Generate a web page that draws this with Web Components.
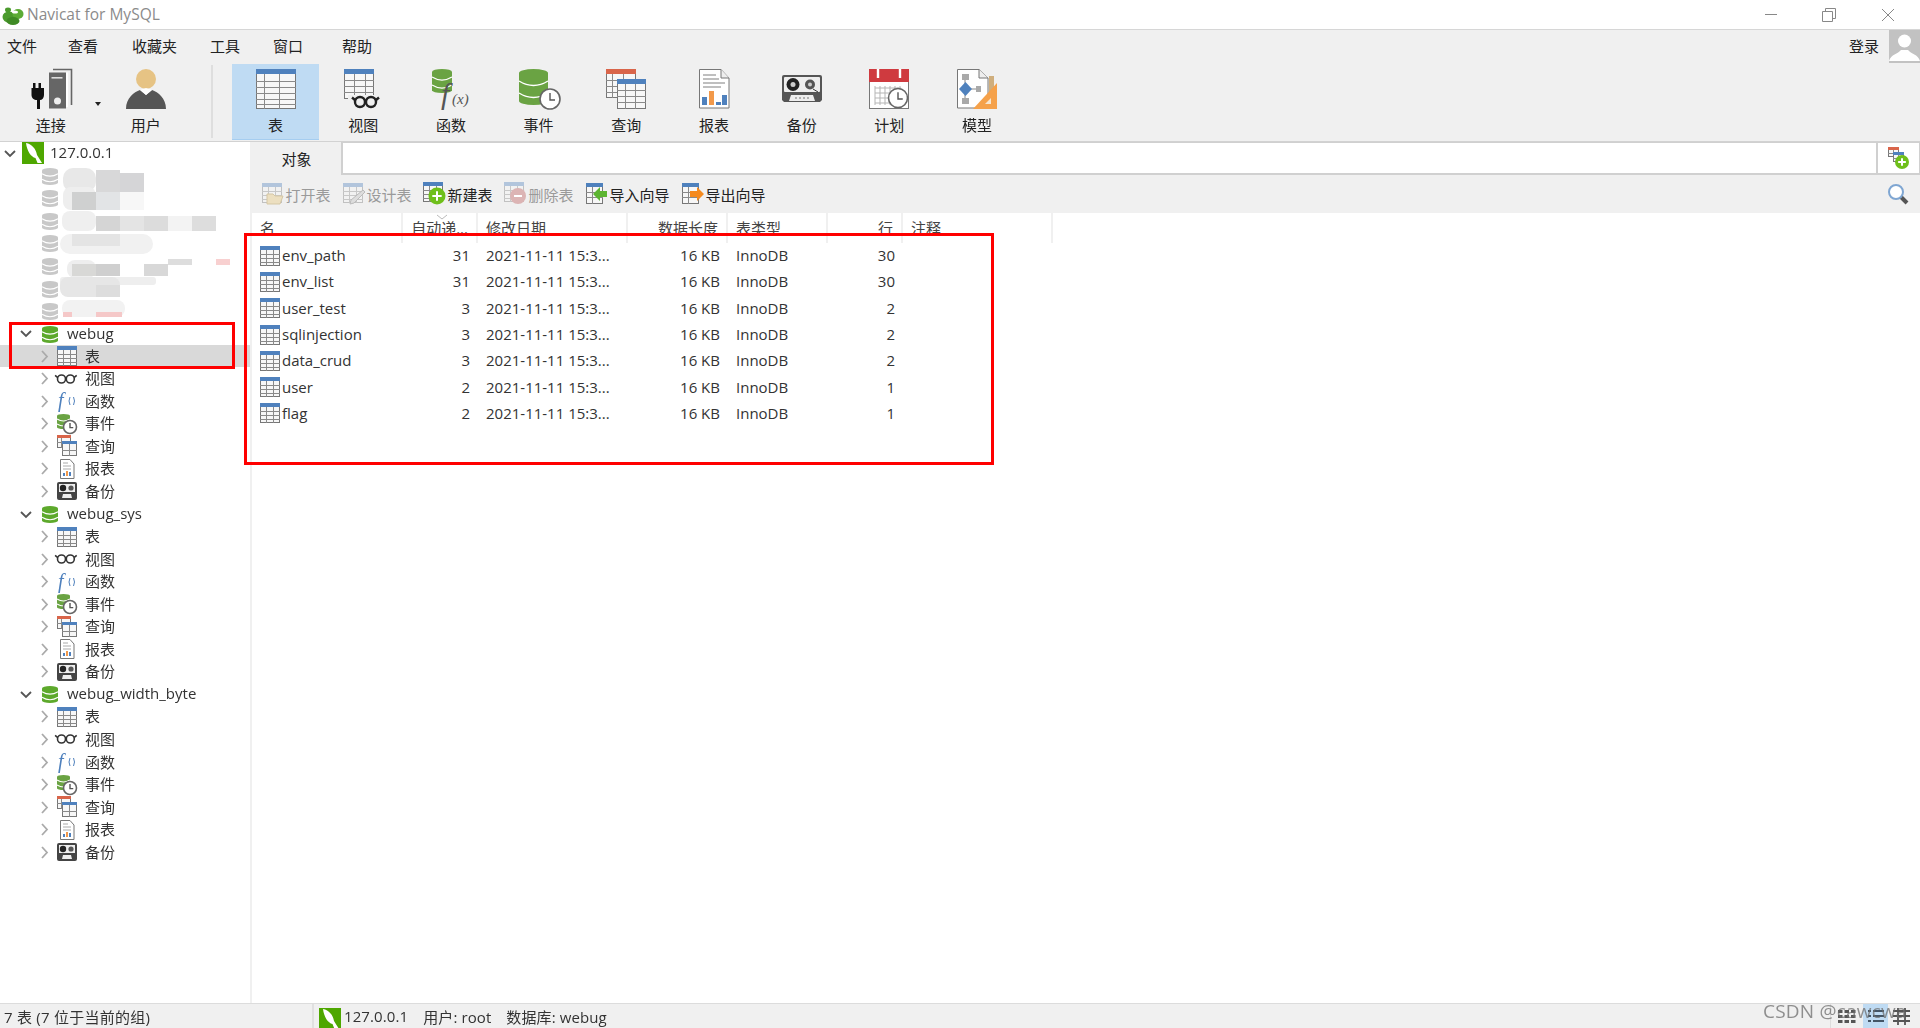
<!DOCTYPE html>
<html lang="zh">
<head>
<meta charset="utf-8">
<title>Navicat for MySQL</title>
<style>
  html, body { margin: 0; height: 100%; overflow: hidden; background: #fff; }
  body { font: 15px "Open Sans", "Noto Sans CJK SC", sans-serif; color: #333; }
</style>
</head>
<body>
<nc-app></nc-app>
<script>
// small drawing helpers, all icons are plain svg strings
function grid(x, y, w, h, head, vs, hs, headColor) {
  let s = `<rect x="${x + .5}" y="${y + .5}" width="${w - 1}" height="${h - 1}" fill="#f7f7f7" stroke="#777"/>`
  s += `<rect x="${x}" y="${y}" width="${w}" height="${head}" fill="${headColor || "#4f81bd"}"/>`
  vs.forEach(v => { s += `<path d="M${x + v + .5} ${y + head}V${y + h}" stroke="#8a8a8a"/>` })
  hs.forEach(v => { s += `<path d="M${x} ${y + v + .5}H${x + w}" stroke="#8a8a8a"/>` })
  return s
}
function db(x, y, w, h, color) {
  const ry = w * .14
  let s = `<rect x="${x}" y="${y}" width="${w}" height="${h}" rx="${w / 2}" ry="${ry}" fill="${color}"/>`
  for (let i = 1; i < 3; i++) {
    const top = y + i * h / 3
    s += `<path d="M${x} ${top}Q${x + w / 2} ${top + 2.2 * ry} ${x + w} ${top}" fill="none" stroke="#fff" stroke-width="${w > 20 ? 1.4 : 1.1}"/>`
  }
  return s
}
function clock(cx, cy, r) {
  return `<circle cx="${cx}" cy="${cy}" r="${r}" fill="#fff" stroke="#666" stroke-width="${r > 6 ? 1.6 : 1.2}"/><path d="M${cx} ${cy - r * .6}V${cy + r * .1}H${cx + r * .5}" fill="none" stroke="#555" stroke-width="${r > 6 ? 1.4 : 1}"/>`
}
function glasses(x, y, r, sw) {
  return `<g fill="none" stroke="#222" stroke-width="${sw}"><circle cx="${x + r}" cy="${y + r}" r="${r}"/><circle cx="${x + 3.2 * r}" cy="${y + r}" r="${r}"/><path d="M${x + 2 * r} ${y + r}h${r * .2}M${x} ${y + r * .6}l${-r * .6} ${-r * .5}M${x + 4.2 * r} ${y + r * .6}l${r * .6} ${-r * .5}"/></g>`
}
const dolphin = `<rect width="22" height="22" fill="#4ea700"/><path d="M4 1C10 2 14 7 15 13L20 21H15.5L13.5 16C9 15 5 9 4 1Z" fill="#fff"/>`
const smallTable = (x = 0, y = 0) => grid(x, y, 20, 20, 4, [6, 13], [8, 12, 16])
const plus = (cx, cy, r) => `<circle cx="${cx}" cy="${cy}" r="${r}" fill="#6fbf1a"/><path d="M${cx - r * .55} ${cy}H${cx + r * .55}M${cx} ${cy - r * .55}V${cy + r * .55}" stroke="#fff" stroke-width="2"/>`

const ICONS = {
  logo: [22, `<ellipse cx="7" cy="13" rx="6.5" ry="5.500" fill="#4b9a2d"/><ellipse cx="16" cy="10" rx="5.500" ry="5" fill="#5cab35"/><ellipse cx="11" cy="17" rx="6.500" ry="4" fill="#3f8a25"/><ellipse cx="6" cy="6" rx="3" ry="2.400" fill="#4b9a2d"/><ellipse cx="13" cy="8" rx="3" ry="1.600" fill="#fff"/>`],
  connect: [44, `<path d="M24 1.500H42.500V37" fill="none" stroke="#666" stroke-width="1.600"/><rect x="20" y="4.500" width="17" height="36" fill="#666"/><path d="M37 4.500H39V39H37Z" fill="#fff"/><rect x="22.500" y="9" width="11" height="1.600" fill="#ddd"/><circle cx="28.500" cy="33" r="3.500" fill="#eee"/>
    <path d="M4 15h2.500v5h3v-5H12v5h3v7c0 3-2 5-4 5v9H8v-9c-3 0-5.500-2-5.500-5v-7H4Z" fill="#111"/>`],
  user: [44, `<circle cx="22" cy="11" r="10" fill="#e6c384"/><path d="M2 41C2 30 10 24 16 22L22 27 28 22C34 24 42 30 42 41Z" fill="#555"/><path d="M16 22L22 27 28 22 22 20Z" fill="#fff"/>`],
  table: [44, grid(2, 1, 40, 40, 5, [8, 23], [12, 18, 24, 30, 35])],
  view: [44, grid(3, 1, 30, 30, 5, [10, 21], [11, 17, 23]) + `<rect x="7" y="27" width="36" height="12" fill="#f0f0f0"/>` + glasses(14, 29, 5, 2.4)],
  func: [44, db(3, 1, 20, 24, "#6aa343") + `<text x="12" y="36" font-family="Liberation Serif" font-style="italic" font-size="30" fill="#555">f</text><text x="23" y="36" font-family="Liberation Serif" font-style="italic" font-size="15" fill="#555">(x)</text>`],
  event: [44, db(2, 1, 29, 36, "#6aa343") + clock(33, 31, 10)],
  query: [44, grid(2, 1, 30, 29, 5, [6, 17], [11, 17, 23], "#d9654a") + grid(13, 11, 29, 30, 5, [8, 18], [11, 17, 23])],
  report: [44, `<path d="M7.500 1.500H29L37 10V40H7.500Z" fill="#fff" stroke="#777"/><path d="M29 1.500V10H37" fill="#eee" stroke="#777"/><path d="M11 7h13M11 11h16M11 15h22M11 19h18" stroke="#aaa" stroke-width="1.400"/><rect x="10" y="29" width="5" height="8" fill="#4f81bd"/><rect x="17" y="23" width="5" height="14" fill="#f2994a"/><rect x="24" y="34" width="5" height="3" fill="#4f81bd"/><rect x="30" y="27" width="5" height="10" fill="#4f81bd"/>`],
  backup: [44, `<path d="M4 7H40Q42 7 42 9V32L40 34H4L2 32V9Q2 7 4 7Z" fill="#555"/><rect x="4" y="9" width="36" height="15" rx="1" fill="#eee"/><circle cx="13" cy="16.500" r="6.500" fill="#222"/><circle cx="13" cy="16.500" r="2.500" fill="#ccc"/><circle cx="30" cy="16.500" r="5" fill="#555"/><circle cx="30" cy="16.500" r="2" fill="#ccc"/><path d="M33 21l5 3" stroke="#333"/><path d="M9 33L11 27H33L35 33Z" fill="#eee"/><path d="M15 30h14" stroke="#777" stroke-dasharray="2 2"/>`],
  schedule: [44, `<rect x="2.500" y="1.500" width="39" height="39" fill="#fff" stroke="#777"/><rect x="2" y="1" width="40" height="13" fill="#cf3a3f"/><path d="M11 1V10M33 1V10" stroke="#fff" stroke-width="2.400"/><g stroke="#b5b5b5"><path d="M8 20H34M8 25H32M8 30H28M8 35H28"/><path d="M8 18V37M13 18V37M18 18V37M23 18V37M28 18V34M33 18V24"/></g>` + clock(31, 30, 9.5)],
  model: [44, `<path d="M2.500 1.500H24L33 10V40H2.500Z" fill="#fff" stroke="#777"/><path d="M24 1.500V10H33" fill="#eee" stroke="#777"/><rect x="7" y="6" width="7" height="6" fill="#a9a9a9"/><rect x="7" y="30" width="7" height="6" fill="#a9a9a9"/><rect x="21" y="18" width="5" height="6" fill="#a9a9a9"/><path d="M10 12V30M16 21H21" stroke="#888"/><path d="M10.500 14L17 21 10.500 28 4 21Z" fill="#4f81bd"/><rect x="34" y="8" width="5" height="16" fill="#cfae7d"/><path d="M42 15V41H18Z" fill="#f5a14a"/><path d="M36 30V36H30Z" fill="#f7e6cf"/>`],
  conn: [22, dolphin],
  "db-green": [16, db(0, 0, 16, 17, "#5da92c")],
  "db-gray": [16, db(0, 0, 16, 17, "#c8c8c8")],
  "s-table": [22, smallTable(1, 1)],
  "s-view": [22, glasses(1.5, 7, 4, 1.6).replace(/#222/g, "#333")],
  "s-func": [22, `<text x="2" y="17" font-family="Liberation Serif" font-style="italic" font-size="20" fill="#4f81bd">f</text><path d="M14 7Q12 11 14 15M17.500 7Q19.500 11 17.500 15" fill="none" stroke="#4f81bd"/>`],
  "s-event": [22, db(1, 1, 13, 15, "#6aa343") + clock(14, 14, 6.5)],
  "s-query": [22, grid(1, 0, 14, 13, 3, [4], [7], "#d9654a") + grid(6, 6, 15, 15, 3, [7], [9])],
  "s-report": [22, `<path d="M4.500 1.500H14L18 6V20.500H4.500Z" fill="#fff" stroke="#777"/><path d="M7 5h5M7 8h8M7 11h8" stroke="#aaa"/><rect x="7" y="15" width="2" height="3" fill="#4f81bd"/><rect x="10" y="13" width="2" height="5" fill="#f2994a"/><rect x="13" y="14" width="2" height="4" fill="#4f81bd"/>`],
  "s-tape": [22, `<rect x="1" y="2" width="20" height="18" rx="2" fill="#444"/><rect x="3" y="4" width="16" height="8" fill="#eee"/><circle cx="7" cy="8" r="3.200" fill="#222"/><circle cx="15" cy="8" r="2.600" fill="#555"/><path d="M6 18L7 14H15L16 18Z" fill="#eee"/>`],
  "a-open": [24, `<g opacity=".38">${smallTable(1, 1)}</g><path d="M6 12H12L14 14H22L19 22H6Z" fill="#ecdfc0" stroke="#d5c7a5"/>`],
  "a-design": [24, `<g opacity=".38">${smallTable(1, 1)}</g><path d="M21 8L23 10 12 21 8 22 9 18Z" fill="#ddd" stroke="#bbb"/>`],
  "a-new": [24, smallTable(0, 0) + plus(14, 14, 8.5)],
  "a-del": [24, `<g opacity=".38">${smallTable(0, 0)}</g><circle cx="14" cy="14" r="8" fill="#dcb4b4"/><path d="M10 14H18" stroke="#fff" stroke-width="2"/>`],
  "a-import": [24, grid(1, 1, 17, 21, 4, [6], [9, 14]) + `<path d="M8 12L15 5V9H22V15H15V19Z" fill="#5cb531"/>`],
  "a-export": [24, grid(1, 1, 17, 21, 4, [6], [9, 14]) + `<path d="M23 12L16 5V9H9V15H16V19Z" fill="#f58a1f"/>`],
  search: [22, `<path d="M13 13L20 20" stroke="#555" stroke-width="4"/><circle cx="9" cy="9" r="7" fill="#fff" stroke="#7fa6d2" stroke-width="2"/>`],
  addtab: [22, grid(0, 0, 11, 10, 3, [5], [6], "#d9654a") + grid(5, 5, 11, 10, 3, [5], [6]) + plus(14, 15, 7)],
  "row-table": [20, grid(0, 0, 20, 20, 4, [6, 13], [8, 12, 16])],
  "v-grid": [18, `<g fill="#555"><rect x="0" y="3" width="4.500" height="3"/><rect x="6.500" y="3" width="4.500" height="3"/><rect x="13" y="3" width="4.500" height="3"/><rect x="0" y="8" width="4.500" height="3"/><rect x="6.500" y="8" width="4.500" height="3"/><rect x="13" y="8" width="4.500" height="3"/><rect x="0" y="13" width="4.500" height="3"/><rect x="6.500" y="13" width="4.500" height="3"/><rect x="13" y="13" width="4.500" height="3"/></g>`],
  "v-list": [18, `<g fill="#456"><rect x="1" y="3" width="3" height="2"/><rect x="6" y="3" width="11" height="2"/><rect x="1" y="8" width="3" height="2"/><rect x="6" y="8" width="11" height="2"/><rect x="1" y="13" width="3" height="2"/><rect x="6" y="13" width="11" height="2"/></g>`],
  "v-detail": [18, `<path d="M0 4H17M0 9H17M0 14H17M5 1V18M12 1V18" stroke="#555" stroke-width="1.800"/>`]
}

class NcIcon extends HTMLElement {
  connectedCallback() {
    const [box, body] = ICONS[this.getAttribute("name")]
    const size = this.getAttribute("size") || box
    this.attachShadow({ mode: "open" }).innerHTML = `
      <style>:host { display: block; flex: none; width: ${size}px; height: ${size}px; } svg { display: block; overflow: visible; }</style>
      <svg width="${size}" height="${size}" viewBox="0 0 ${box} ${box}">${body}</svg>`
  }
}
customElements.define("nc-icon", NcIcon)

class NcTitlebar extends HTMLElement {
  constructor() {
    super()
    this.attachShadow({ mode: "open" }).innerHTML = `
    <style>
      :host { display: flex; align-items: center; height: 29px; border-bottom: 1px solid #d6d6d6; background: #fff; padding: 0 3px 0 2px; color: #8b8b8b; }
      .name { margin-left: 3px; font-size: 15.5px; margin-bottom: 2px; }
      .ctl { width: 58.5px; display: flex; justify-content: center; }
      .first { margin-left: auto; }
    </style>
    <nc-icon name="logo"></nc-icon>
    <span class="name"><slot></slot></span>
    <div class="ctl first"><svg width="14" height="14"><path d="M1 6.500H13" stroke="#888"/></svg></div>
    <div class="ctl"><svg width="14" height="14"><path d="M.5 3.500H10.500V13.500H.5ZM3.500 3.500V.5H13.500V10.500H10.500" fill="none" stroke="#888"/></svg></div>
    <div class="ctl"><svg width="14" height="14"><path d="M1 1L13 13M13 1L1 13" stroke="#888"/></svg></div>`
  }
}
customElements.define("nc-titlebar", NcTitlebar)

class NcMenubar extends HTMLElement {
  constructor() {
    super()
    this.attachShadow({ mode: "open" }).innerHTML = `
    <style>
      :host { display: flex; align-items: center; height: 33px; background: #f0f0f0; padding-left: 7px; color: #222; }
      ::slotted(span) { margin-right: var(--gap, 32px); margin-bottom: 2px; }
      .login { margin-left: auto; margin-right: 10px; margin-bottom: 2px; }
      .avatar { width: 31px; height: 33px; background: #c2c2c2; align-self: flex-start; }
      svg { display: block; }
    </style>
    <slot></slot>
    <span class="login">登录</span>
    <div class="avatar"><svg width="31" height="31"><circle cx="15.500" cy="11" r="6.500" fill="#fff"/><path d="M0 31C2 24 9 24 12 20H19C22 24 29 24 31 31Z" fill="#fff"/></svg></div>`
  }
}
customElements.define("nc-menubar", NcMenubar)

class NcToolButton extends HTMLElement {
  constructor() {
    super()
    this.attachShadow({ mode: "open" }).innerHTML = `
    <style>
      :host { display: flex; flex-direction: column; align-items: center; width: 87.7px; height: 76px; padding-top: 4px; box-sizing: border-box; margin-top: 1px; color: #222; }
      :host([active]) { background: #bfdbf3; border-bottom: 1px solid #a5cdf0; }
      .label { height: 26px; line-height: 26px; }
    </style>
    <slot name="icon"></slot>
    <div class="label"><slot></slot></div>`
  }
}
customElements.define("nc-tool-button", NcToolButton)

class NcToolbar extends HTMLElement {
  constructor() {
    super()
    this.attachShadow({ mode: "open" }).innerHTML = `
    <style>
      :host { display: flex; height: 78px; padding-left: 7px; background: #f0f0f0; border-bottom: 1px solid #d2d2d2; }
      .arrow { width: 7.3px; flex: none; position: relative; }
      .arrow::after { content: ""; position: absolute; left: 0; top: 39px; border: 3.5px solid transparent; border-top: 4px solid #222; }
      .sep { width: 2px; height: 73px; margin: 2px 19px 0 21px; background: #dedede; flex: none; }
    </style>
    ${this.btn("connect", "连接")}
    <div class="arrow"></div>
    ${this.btn("user", "用户")}
    <div class="sep"></div>
    ${this.btn("table", "表", true)}
    ${this.btn("view", "视图")}
    ${this.btn("func", "函数")}
    ${this.btn("event", "事件")}
    ${this.btn("query", "查询")}
    ${this.btn("report", "报表")}
    ${this.btn("backup", "备份")}
    ${this.btn("schedule", "计划")}
    ${this.btn("model", "模型")}`
  }
  btn(icon, label, active) {
    return `<nc-tool-button ${active ? "active" : ""}><nc-icon slot="icon" name="${icon}"></nc-icon>${label}</nc-tool-button>`
  }
}
customElements.define("nc-toolbar", NcToolbar)

class NcTreeRow extends HTMLElement {
  connectedCallback() {
    const kind = this.getAttribute("kind") || "child"
    const icon = this.getAttribute("icon")
    const open = kind !== "child"
    const chev = open ? `<path d="M1 4L6 9 11 4" fill="none" stroke="#555" stroke-width="1.800"/>` : `<path d="M3 1L8 6.500 3 12" fill="none" stroke="#aaa" stroke-width="1.800"/>`
    const noChev = this.hasAttribute("nochev")
    const size = kind === "db" ? 16 : 22
    this.attachShadow({ mode: "open" }).innerHTML = `
    <style>
      :host { display: flex; align-items: center; height: 22.56px; white-space: nowrap; color: #333; }
      :host([selected]) { background: #d9d9d9; }
      :host([kind=root]) { padding-left: 4px; }
      :host([kind=db]) { padding-left: 20px; }
      :host(:not([kind])) { padding-left: 39px; }
      .chev { width: 12px; height: 13px; flex: none; }
      .label { margin-bottom: 2px; }
      nc-icon { margin-left: ${kind === "root" ? 6 : kind === "db" ? 10 : 5}px; margin-right: ${kind === "root" ? 6 : kind === "db" ? 9 : 7}px; }
    </style>
    <svg class="chev" width="12" height="13">${noChev ? "" : chev}</svg>
    <nc-icon name="${icon}" size="${size}"></nc-icon>
    <span class="label"><slot></slot></span>`
  }
}
customElements.define("nc-tree-row", NcTreeRow)

class NcTree extends HTMLElement {
  constructor() {
    super()
    const kids = ["表", "视图", "函数", "事件", "查询", "报表", "备份"]
    const names = ["s-table", "s-view", "s-func", "s-event", "s-query", "s-report", "s-tape"]
    const group = (name, sel) => `<nc-tree-row kind="db" icon="db-green">${name}</nc-tree-row>` +
      kids.map((k, i) => `<nc-tree-row icon="${names[i]}" ${sel && i == 0 ? "selected" : ""}>${k}</nc-tree-row>`).join("")
    let gray = ""
    for (let i = 0; i < 7; i++) gray += `<nc-tree-row kind="db" icon="db-gray" nochev></nc-tree-row>`
    this.attachShadow({ mode: "open" }).innerHTML = `
    <style>
      :host { display: block; width: 250px; flex: none; background: #fff; overflow: hidden; }
    </style>
    <nc-tree-row kind="root" icon="conn">127.0.0.1</nc-tree-row>
    ${gray}
    ${group("webug", true)}
    ${group("webug_sys")}
    ${group("webug_width_byte")}`
  }
}
customElements.define("nc-tree", NcTree)

class NcAction extends HTMLElement {
  connectedCallback() {
    this.attachShadow({ mode: "open" }).innerHTML = `
    <style>
      :host { display: flex; align-items: center; gap: 1px; color: #222; margin-right: 11px; }
      :host([off]) { color: #9a9a9a; }
    </style>
    <nc-icon name="${this.getAttribute("icon")}"></nc-icon><slot></slot>`
  }
}
customElements.define("nc-action", NcAction)

class NcObjects extends HTMLElement {
  constructor() {
    super()
    const rows = [
      ["env_path", 31, 30], ["env_list", 31, 30], ["user_test", 3, 2], ["sqlinjection", 3, 2],
      ["data_crud", 3, 2], ["user", 2, 1], ["flag", 2, 1]
    ]
    const rowHtml = rows.map(r => `<div class="row">
        <div class="c name"><nc-icon name="row-table"></nc-icon><span>${r[0]}</span></div>
        <div class="c r">${r[1]}</div>
        <div class="c">2021-11-11 15:3...</div>
        <div class="c r">16 KB</div>
        <div class="c">InnoDB</div>
        <div class="c r">${r[2]}</div>
        <div class="c"></div>
      </div>`).join("")
    this.attachShadow({ mode: "open" }).innerHTML = `
    <style>
      :host { display: flex; flex-direction: column; flex: 1; min-width: 0; background: #fff; color: #333; }
      .tabs { display: flex; height: 33px; background: #f0f0f0; flex: none; }
      .tab { width: 89px; display: flex; align-items: center; justify-content: center; color: #222; }
      .field { flex: 1; background: #fff; border: 1px solid #d0d0d0; border-width: 1px 0 2px 2px; }
      .add { width: 44px; background: #fff; border: 1px solid #d0d0d0; border-width: 1px 1px 2px 2px; box-sizing: border-box; display: flex; align-items: center; justify-content: center; }
      .actions { display: flex; align-items: center; height: 38px; background: #f0f0f0; padding-left: 8.500px; flex: none; }
      .actions nc-icon { margin-left: auto; margin-right: 11px; }
      .row, .head { display: grid; grid-template-columns: 151px 75px 150px 100px 100px 75px 150px; width: 801px; }
      .row { height: 26.3px; align-items: center; }
      .row .c { line-height: 24px; padding-bottom: 2px; }
      .row nc-icon { margin-top: 1px; }
      .head { height: 30px; position: relative; flex: none; }
      .head .c { border-right: 2px solid #f0f0f0; height: 30px; line-height: 30px; box-sizing: border-box; color: #444; }
      .c { padding: 0 8px; white-space: nowrap; overflow: hidden; }
      .r { text-align: right; }
      .name { display: flex; align-items: center; gap: 2px; padding-right: 0; }
      .sort { position: absolute; left: 184px; top: 1px; }
      .body { flex: 1; }
    </style>
    <div class="tabs">
      <div class="tab">对象</div>
      <div class="field"></div>
      <div class="add"><nc-icon name="addtab"></nc-icon></div>
    </div>
    <div class="actions">
      <nc-action off icon="a-open">打开表</nc-action>
      <nc-action off icon="a-design">设计表</nc-action>
      <nc-action icon="a-new">新建表</nc-action>
      <nc-action off icon="a-del">删除表</nc-action>
      <nc-action icon="a-import">导入向导</nc-action>
      <nc-action icon="a-export">导出向导</nc-action>
      <nc-icon name="search"></nc-icon>
    </div>
    <div class="head">
      <div class="c">名</div><div class="c r">自动递...</div><div class="c">修改日期</div><div class="c r">数据长度</div><div class="c">表类型</div><div class="c r">行</div><div class="c">注释</div>
      <svg class="sort" width="12" height="6"><path d="M1 1L6 5 11 1" fill="none" stroke="#bbb"/></svg>
    </div>
    <div class="body">${rowHtml}</div>`
  }
}
customElements.define("nc-objects", NcObjects)

class NcStatusbar extends HTMLElement {
  constructor() {
    super()
    this.attachShadow({ mode: "open" }).innerHTML = `
    <style>
      :host { display: flex; align-items: center; height: 25px; background: #f0f0f0; border-top: 1px solid #dcdcdc; box-sizing: border-box; color: #333; white-space: nowrap; overflow: hidden; }
      .left { width: 308px; padding-left: 4px; height: 100%; display: flex; align-items: center; border-right: 2px solid #e0e0e0; flex: none; box-sizing: content-box; letter-spacing: .25px; }
      .mid { display: flex; align-items: center; flex: 1; padding-left: 5px; height: 100%; }
      .mid span { margin-left: 3px; margin-right: 12px; letter-spacing: .1px; }
      .mid nc-icon { margin-top: 5px; }
      .views { display: flex; height: 100%; align-items: center; border-left: 1px solid #ddd; padding-left: 7px; width: 90px; box-sizing: border-box; }
      .v { height: 100%; display: flex; align-items: center; justify-content: center; }
      .on { background: #bfdbf3; width: 25px; margin: 0 5px 0 7px; }
    </style>
    <div class="left">7 表 (7 位于当前的组)</div>
    <div class="mid"><nc-icon name="conn"></nc-icon><span>127.0.0.1</span><span>用户: root</span><span>数据库: webug</span></div>
    <div class="views">
      <div class="v"><nc-icon name="v-grid"></nc-icon></div>
      <div class="v on"><nc-icon name="v-list"></nc-icon></div>
      <div class="v"><nc-icon name="v-detail"></nc-icon></div>
    </div>`
  }
}
customElements.define("nc-statusbar", NcStatusbar)

// mosaic that hides the database names in the screenshot
class NcMosaic extends HTMLElement {
  constructor() {
    super()
    const blocks = [
      [63, 168, 33, 24, "#e8e8e8", 10], [96, 170, 24, 22, "#d8d8d9"], [120, 173, 24, 19, "#d5d5d7"],
      [63, 187, 33, 23, "#eeeeee", 8], [72, 192, 24, 18, "#cfd0d0"], [96, 192, 24, 18, "#e2e4e6"], [120, 192, 24, 18, "#f7f7f7"],
      [62, 211, 34, 20, "#efefef", 8], [96, 216, 24, 15, "#d5d5d5"], [120, 216, 24, 15, "#e4e4e4"], [144, 216, 24, 15, "#dcdcdc"], [168, 216, 24, 15, "#f3f3f3"], [192, 216, 24, 15, "#dddddd"],
      [60, 234, 93, 20, "#f1f1f1", 10], [72, 234, 48, 12, "#e4e4e4"],
      [67, 260, 29, 18, "#eeeeee", 8], [72, 264, 24, 12, "#d8d8d6"], [96, 264, 24, 12, "#cfcfcf"], [144, 264, 24, 12, "#d8d8d8"], [168, 259, 24, 6, "#dddddd"], [216, 259, 14, 6, "#f8d0d0"],
      [60, 277, 96, 8, "#eeeeee", 3], [60, 277, 60, 20, "#e6e6e6", 8], [96, 285, 24, 12, "#dddddd"],
      [62, 300, 63, 17, "#f2f2f2", 8], [63, 312, 9, 5, "#f5c8c8"], [96, 312, 26, 5, "#f5c8c8"]
    ]
    const rects = blocks.map(b => `<rect x="${b[0]}" y="${b[1]}" width="${b[2]}" height="${b[3]}" rx="${b[5] || 0}" fill="${b[4]}"/>`).join("")
    this.attachShadow({ mode: "open" }).innerHTML = `
    <style>:host { position: absolute; left: 0; top: 0; width: 250px; height: 330px; pointer-events: none; } svg { display: block; }</style>
    <svg width="250" height="330">${rects}</svg>`
  }
}
customElements.define("nc-mosaic", NcMosaic)

class NcApp extends HTMLElement {
  constructor() {
    super()
    this.attachShadow({ mode: "open" }).innerHTML = `
    <style>
      :host { display: flex; flex-direction: column; width: 1920px; height: 1028px; position: relative; overflow: hidden; filter: blur(.35px); }
      .main { display: flex; flex: 1; min-height: 0; }
      .split { width: 2px; flex: none; background: #f0f0f0; }
      .mark { position: absolute; border: 3px solid #f00; box-sizing: border-box; }
      .wm { position: absolute; left: 1763px; top: 998px; font-size: 19px; color: rgba(110, 110, 110, .75); white-space: nowrap; letter-spacing: .2px; }
    </style>
    <nc-titlebar>Navicat for MySQL</nc-titlebar>
    <nc-menubar>
      <span style="--gap:31px">文件</span><span style="--gap:34px">查看</span><span style="--gap:33px">收藏夹</span><span style="--gap:33px">工具</span><span style="--gap:39px">窗口</span><span style="--gap:0">帮助</span>
    </nc-menubar>
    <nc-toolbar></nc-toolbar>
    <div class="main">
      <nc-tree></nc-tree>
      <div class="split"></div>
      <nc-objects></nc-objects>
    </div>
    <nc-statusbar></nc-statusbar>
    <nc-mosaic></nc-mosaic>
    <div class="mark" style="left:9px;top:322px;width:226px;height:47px"></div>
    <div class="mark" style="left:244px;top:233px;width:750px;height:232px"></div>
    <div class="wm">CSDN @cawcwa</div>`
  }
}
customElements.define("nc-app", NcApp)
</script>
</body>
</html>
